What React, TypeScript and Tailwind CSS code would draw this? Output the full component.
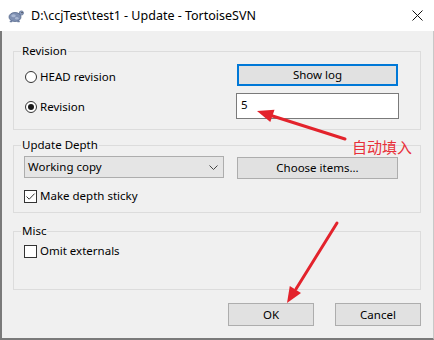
import type { ReactNode } from "react";

function Radio({ checked }: { checked?: boolean }) {
  return (
    <span className="flex h-[12px] w-[12px] shrink-0 items-center justify-center rounded-full border border-[#333333] bg-white">
      {checked && <span className="h-[6px] w-[6px] rounded-full bg-[#1a1a1a]" />}
    </span>
  );
}

function CheckBox({ checked }: { checked?: boolean }) {
  return (
    <span className="flex h-[13px] w-[13px] shrink-0 items-center justify-center border border-[#333333] bg-white">
      {checked && (
        <svg width="11" height="11" viewBox="0 0 11 11">
          <path d="M1.5 5.5 L4.2 8.2 L9.6 2.6" fill="none" stroke="#333" strokeWidth="1" />
        </svg>
      )}
    </span>
  );
}

function Group({ label, className, children }: { label: string; className: string; children: ReactNode }) {
  return (
    <fieldset className={`ml-[11px] mr-[12px] border border-[#dcdcdc] px-[10px] ${className}`}>
      <legend className="ml-[-3px] px-[1px] leading-[16px]">{label}</legend>
      {children}
    </fieldset>
  );
}

function Turtle() {
  return (
    <svg width="16" height="14" viewBox="0 0 16 14">
      <ellipse cx="7" cy="8" rx="6" ry="4.5" fill="#7f90b2" stroke="#56688c" strokeWidth="0.8" />
      <ellipse cx="5.5" cy="6.8" rx="2.2" ry="1.5" fill="#a9b7d2" />
      <ellipse cx="8.8" cy="9.2" rx="1.8" ry="1.2" fill="#a9b7d2" />
      <circle cx="13.4" cy="4" r="2.1" fill="#8d9dbd" stroke="#56688c" strokeWidth="0.7" />
      <circle cx="14" cy="3.6" r="0.6" fill="#222" />
      <ellipse cx="3" cy="12.4" rx="1.4" ry="0.9" fill="#6c7da0" />
      <ellipse cx="10.5" cy="12.4" rx="1.4" ry="0.9" fill="#6c7da0" />
    </svg>
  );
}

export default function App() {
  return (
    <div className="relative h-[340px] w-[434px] overflow-hidden bg-white font-['Noto_Sans',sans-serif] text-[11.5px] text-black">
      {/* title bar */}
      <div className="flex h-[31px] items-center bg-white">
        <div className="ml-[8px] mt-[1px]">
          <Turtle />
        </div>
        <span className="ml-[7px] text-[12.5px] leading-[16px]">D:\ccjTest\test1 - Update - TortoiseSVN</span>
        <svg className="ml-auto mr-[11px]" width="11" height="11" viewBox="0 0 11 11">
          <path d="M0.5 0.5 L10.5 10.5 M10.5 0.5 L0.5 10.5" stroke="#111" strokeWidth="1" />
        </svg>
      </div>

      {/* body */}
      <div className="flex h-[309px] flex-col border-b-2 border-l-2 border-r border-b-[#7a7a7a] border-l-[#7a7a7a] border-r-[#c8c8c8] bg-[#f0f0f0]">
        <Group label="Revision" className="mt-[12px] pb-[10px] pt-[5px]">
          <div className="grid grid-cols-[213px_161px] grid-rows-[22px_26px] gap-y-[7px]">
            <label className="flex items-center gap-[3px] pl-[1px] pt-[4px]">
              <Radio />
              <span>HEAD revision</span>
            </label>
            <button className="h-[22px] w-[161px] border-2 border-[#0078d7] bg-[#e1e1e1] leading-[16px]">Show log</button>
            <label className="flex items-center gap-[3px] pl-[1px] pt-[1px]">
              <Radio checked />
              <span>Revision</span>
            </label>
            <div className="ml-[-1px] flex h-[26px] w-[163px] items-center border border-[#7a7a7a] bg-white pb-[3px] pl-[4px]">
              5
            </div>
          </div>
        </Group>

        <Group label="Update Depth" className="mt-[7px] pb-[8px] pt-[3px]">
          <div className="grid grid-cols-[213px_161px] items-start">
            <div className="flex h-[22px] w-[200px] items-center justify-between border border-[#adadad] bg-[#e5e5e5] pl-[3px] pr-[5px]">
              <span>Working copy</span>
              <svg width="9" height="5" viewBox="0 0 9 5">
                <path d="M0.5 0.5 L4.5 4.5 L8.5 0.5" fill="none" stroke="#444" strokeWidth="1" />
              </svg>
            </div>
            <button className="mt-[1px] h-[22px] w-[161px] border border-[#adadad] bg-[#e1e1e1] leading-[16px]">
              Choose items...
            </button>
          </div>
          <label className="mt-[9px] flex h-[16px] items-center gap-[3px]">
            <CheckBox checked />
            <span>Make depth sticky</span>
          </label>
        </Group>

        <Group label="Misc" className="mt-[10px] pb-[30px] pt-[4px]">
          <label className="flex h-[16px] items-center gap-[3px]">
            <CheckBox />
            <span>Omit externals</span>
          </label>
        </Group>

        <div className="mr-[12px] mt-[13px] flex justify-end gap-[21px]">
          <button className="h-[23px] w-[86px] border border-[#adadad] bg-[#e1e1e1] leading-[16px]">OK</button>
          <button className="h-[23px] w-[86px] border border-[#adadad] bg-[#e1e1e1] leading-[16px]">Cancel</button>
        </div>
      </div>

      {/* annotations */}
      <span className="absolute left-[352px] top-[137px] font-['Noto_Sans_CJK_SC',sans-serif] text-[15px] leading-[20px] text-[#e8303a]">
        自动填入
      </span>
      <svg className="pointer-events-none absolute left-0 top-0" width="434" height="340" viewBox="0 0 434 340">
        <line x1="345" y1="139" x2="271" y2="115.5" stroke="#e3232c" strokeWidth="3" strokeLinecap="round" />
        <polygon points="257,111 274.5,109.8 270.3,122" fill="#e3232c" />
        <line x1="337" y1="223" x2="296" y2="289" stroke="#e3232c" strokeWidth="3" strokeLinecap="round" />
        <polygon points="287,303 301,293 289.8,286" fill="#e3232c" />
      </svg>
    </div>
  );
}
